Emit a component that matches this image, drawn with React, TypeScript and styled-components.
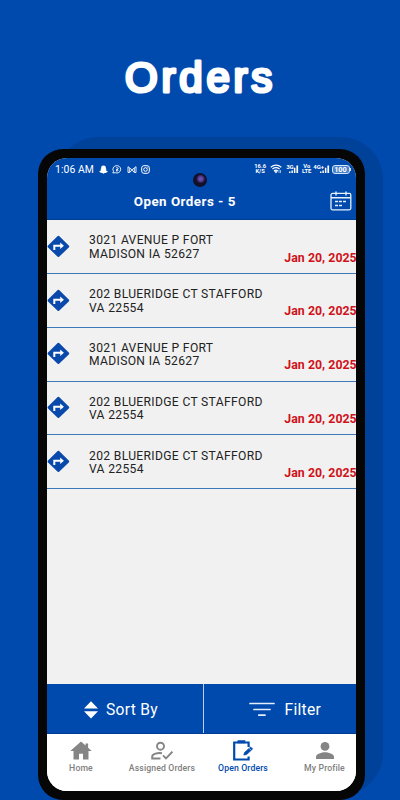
import React from 'react';
import styled, { createGlobalStyle } from 'styled-components';

const BLUE = '#004aad';

const Global = createGlobalStyle`
  * { box-sizing: border-box; }
  body { margin: 0; background: ${BLUE}; font-family: Roboto, "Liberation Sans", sans-serif; }
`;

const Page = styled.main`
  position: relative;
  width: 400px;
  height: 800px;
  overflow: hidden;
  background: ${BLUE};
`;

const Title = styled.h1`
  margin: 0;
  height: 149px;
  padding-top: 46px;
  svg { display: block; margin: 0 auto; }
`;

/* The round line join softens the corners of the lettering. */
const Lettering = styled.text`
  font: 400 42px "Liberation Sans", Arial, sans-serif;
  letter-spacing: 3.8px;
  fill: #fff;
  stroke: #fff;
  stroke-width: 3.2px;
  stroke-linejoin: round;
`;

const Backdrop = styled.div`
  position: absolute;
  left: 56px;
  top: 137px;
  width: 327px;
  height: 658px;
  border-radius: 42px;
  background: #004299;
`;

const Phone = styled.section`
  position: relative;
  width: 327px;
  height: 651px;
  margin-left: 37.5px;
  padding: 9px 8.5px 9px 9px;
  border-radius: 25px;
  background: #060606;
`;

const Screen = styled.div`
  height: 100%;
  display: flex;
  flex-direction: column;
  overflow: hidden;
  border-radius: 20px;
  background: #f1f1f1;
`;

const Camera = styled.span`
  position: absolute;
  left: 155.5px;
  top: 24px;
  width: 14px;
  height: 14px;
  border-radius: 50%;
  background: radial-gradient(circle at 55% 42%, #6a4ba8 0 1.5px, #40307c 3px, #130f28 4.6px);
`;

const StatusBar = styled.div`
  flex: none;
  height: 22px;
  display: flex;
  align-items: center;
  padding: 0 5px 0 8.5px;
  background: ${BLUE};
  color: #fff;
`;

const Clock = styled.span`
  width: 43.5px;
  font-size: 10.4px;
  letter-spacing: 0.08px;
  white-space: nowrap;
`;

const StatusIcons = styled.div`
  display: flex;
  align-items: center;
  gap: 4.6px;
`;

const Signals = styled.div`
  display: flex;
  align-items: center;
  margin-left: auto;
`;

const Tiny = styled.span<{ $w: number; $after: number }>`
  width: ${p => p.$w}px;
  margin-right: ${p => p.$after}px;
  font-size: 5.8px;
  line-height: 5px;
  font-weight: 700;
  text-align: center;
  white-space: nowrap;
`;

const Cell = styled.span<{ $before: number; $after: number }>`
  display: flex;
  margin: 0 ${p => p.$after}px 0 ${p => p.$before}px;
  font-size: 6px;
  line-height: 6px;
  font-weight: 700;
  align-items: flex-start;
  svg { margin-left: -4.5px; }
`;

const Battery = styled.span`
  width: 18px;
  height: 9px;
  border: 1px solid #d6e6fb;
  border-radius: 3px;
  background: #4a80c8;
  font-size: 7.4px;
  line-height: 7.5px;
  font-weight: 700;
  text-align: center;
`;

const BatteryTip = styled.i`
  width: 1.5px;
  height: 3px;
  background: #d6e6fb;
`;

const Header = styled.header`
  flex: none;
  height: 40px;
  display: grid;
  grid-template-columns: 276.500px 1fr;
  align-items: center;
  background: ${BLUE};
  border-bottom: 1px solid #003d94;
  color: #fff;
`;

const Heading = styled.h2`
  margin: 5px 0 0;
  text-align: center;
  font-size: 13.4px;
  line-height: 16px;
  font-weight: 700;
  letter-spacing: 0.47px;
`;

const CalendarSlot = styled.span`
  display: flex;
  padding: 2.5px 0 0 6.5px;
`;

const List = styled.ul`
  flex: 1;
  margin: 0;
  padding: 0;
  list-style: none;
`;

const Order = styled.li`
  height: 53.85px;
  display: grid;
  grid-template-columns: 42.5px 183px 1fr;
  border-bottom: 1px solid #3d78b8;
`;

const Direction = styled.span`
  padding: 14.8px 0 0 0.2px;
`;

const Address = styled.p`
  margin: 14.2px 0 0;
  font-size: 12.1px;
  line-height: 13.6px;
  letter-spacing: 0.34px;
  color: #222;
  white-space: pre-line;
`;

const DateText = styled.time`
  margin: 30.6px 0 0 12.3px;
  font-size: 12.3px;
  line-height: 14px;
  font-weight: 700;
  letter-spacing: 0.05px;
  white-space: nowrap;
  color: #d0121a;
`;

const Actions = styled.div`
  flex: none;
  height: 49.3px;
  display: grid;
  grid-template-columns: 157px 1fr;
  background: ${BLUE};
  border-bottom: 1px solid #003c96;
`;

const Action = styled.button<{ $left: number; $gap: number; $rule?: boolean }>`
  display: flex;
  align-items: center;
  gap: ${p => p.$gap}px;
  padding: 3px 0 0 ${p => p.$left}px;
  border: 0;
  border-right: ${p => (p.$rule ? '1px solid #b9cdea' : '0')};
  background: none;
  color: #fff;
  font: 400 15.6px/18px Roboto, sans-serif;
  letter-spacing: 0.3px;
`;

const Nav = styled.nav`
  flex: none;
  height: 57.5px;
  display: grid;
  grid-template-columns: 69px 93px 69px 94px;
  background: #fff;
`;

const Tab = styled.a<{ $active?: boolean }>`
  display: flex;
  flex-direction: column;
  align-items: center;
  padding-top: 5px;
  color: ${p => (p.$active ? BLUE : '#808080')};
  font-size: 8.7px;
  font-weight: 500;
  line-height: 10px;
  white-space: nowrap;
  letter-spacing: 0.12px;
  svg { flex: none; margin-bottom: 2.5px; }
`;

const Ghost = () => (
  <svg width="9" height="9" viewBox="0 0 9 9" fill="#fff"><path d="M4.500.4C3 .4 2.200 1.300 2.200 2.600v1l-.8.3.6.8C1.700 5.700 1 6.200.1 6.500l1 .9 1 .1.2.6 1-.1 1.200.7 1.200-.7 1 .1.200-.6 1-.1 1-.9C8 6.200 7.300 5.700 7 4.700l.6-.8-.8-.3v-1C6.800 1.300 6 .4 4.500.4Z" /></svg>
);
const Bubble = () => (
  <svg width="10" height="9" viewBox="0 0 10 9" fill="none" stroke="#fff" strokeWidth=".9"><path d="M.8 8 1.500 6.300A3.900 3.700 0 1 1 3.200 7.700Z" /><path d="M4.200 2.700h1a.8.8 0 0 1 0 1.700h-1m1 0a.8.8 0 0 1 0 1.600h-1Z" /></svg>
);
const Mail = () => (
  <svg width="10" height="9" viewBox="0 0 10 9" fill="none" stroke="#fff" strokeWidth=".9"><path d="M1 7.500V1.700L5 4.800 9 1.700v5.800H7.300V3.200M1 7.500h1.700V3.200M3 7 5 5.200 7 7" /></svg>
);
const Insta = () => (
  <svg width="9" height="9" viewBox="0 0 9 9" fill="none" stroke="#fff" strokeWidth="1"><rect x=".7" y=".7" width="7.600" height="7.600" rx="2.200" /><circle cx="4.500" cy="4.500" r="1.800" /><path d="M6.400 2.300h.6" /></svg>
);
const Wifi = () => (
  <svg width="12" height="10" viewBox="0 0 12 10" fill="none" stroke="#fff" strokeWidth="1.200"><path d="M.7 3.200Q6-.8 11.300 3.200M2.400 5Q6 2.300 9.600 5M4 6.800Q6 5.500 7.800 6.800" /><path d="m4.500 7.500 1.500 1.600 1.300-1.600ZM9 6v3M10.500 6v3" fill="#fff" strokeWidth=".6" /></svg>
);
const Bars = () => (
  <svg width="10" height="10" viewBox="0 0 10 10" fill="#fff"><path d="M0 7.500h1.500v1.500H0ZM2.400 6.400h1.500V9H2.400ZM4.900 3.700h1.500V9H4.900ZM7.400 1.500h1.700V9H7.400Z" /></svg>
);
const Calendar = () => (
  <svg width="22" height="20" viewBox="0 0 22 20" fill="none" stroke="#e8f0fb" strokeWidth="1.300"><rect x="1" y="2.400" width="19.800" height="16.400" rx="1.500" /><path d="M1 6.700h19.800M6 .4v4M16 .4v4" strokeWidth="1.400" /><path d="M8.900 10.600h3M13 10.600h3M5 14.600h3M9 14.600h3M5 10.600h3" strokeWidth="1.500" /></svg>
);
const Turn = () => (
  <svg width="23" height="23" viewBox="0 0 23 23"><path d="M10.700 1 .8 10.800q-.5.7 0 1.400l9.900 9.600q.7.6 1.400 0l9.900-9.600q.5-.7 0-1.400L12.100 1q-.7-.6-1.400 0Z" fill="#0849ab" /><path d="M7.300 15v-4.300h6.500" fill="none" stroke="#fff" strokeWidth="2" /><path d="m13.200 7.600 3.700 3.200-3.700 3.300Z" fill="#fff" /></svg>
);
const SortIcon = () => (
  <svg width="14" height="18" viewBox="0 0 14 18" fill="#fff"><path d="m7 .3 7 7.300H0ZM0 10.200h14L7 17.500Z" /></svg>
);
const FilterIcon = () => (
  <svg width="26" height="15" viewBox="0 0 26 15" stroke="#e3edfb" strokeWidth="1.700" strokeLinecap="round"><path d="M1 1.500h24M5 7.500h16M9.800 13.200h6.200" /></svg>
);
const HomeIcon = () => (
  <svg width="22" height="22" viewBox="0 0 22 22" fill="#858585"><path d="M11 2.500.3 12.100h3.200v8.300H9v-5.600h4v5.600h5.500v-8.300h3.200l-3.600-3.300V4.400h-2.500V6.500Z" /></svg>
);
const Assigned = () => (
  <svg width="22" height="22" viewBox="0 0 22 22" fill="none" stroke="#858585" strokeWidth="1.900"><circle cx="9.500" cy="7.200" r="3.500" /><path d="M11 14.200C6.500 13.300 1.200 15.200 1.200 17.500v2H9.500M12 16.300l3 3 6.400-6.600" /></svg>
);
const OpenIcon = () => (
  <svg width="22" height="22" viewBox="0 0 22 22" fill="none" stroke={BLUE} strokeWidth="2.200"><path d="M16.600 8V3.500H2.200v17h14.400v-3" /><path d="M5.500 2.700h7.800M9.400 1.200v1.500" strokeWidth="3" /><path d="m11.800 16 .8-2.500 6-5.500 2 2-6 5.500Z" fill={BLUE} strokeWidth=".8" /><path d="m17 9.200 2.200 2.200" stroke="#fff" strokeWidth=".6" /></svg>
);
const Profile = () => (
  <svg width="22" height="22" viewBox="0 0 22 22" fill="#858585"><circle cx="11" cy="7.400" r="4.400" /><path d="M2 20v-2.200c0-3 6-4.500 9-4.500s9 1.500 9 4.500V20Z" /></svg>
);

const MADISON = '3021 AVENUE P FORT\nMADISON IA 52627';
const STAFFORD = '202 BLUERIDGE CT STAFFORD\nVA 22554';
const orders = [MADISON, STAFFORD, MADISON, STAFFORD, STAFFORD];

export default function App() {
  return (
    <Page>
      <Global />
      <Backdrop />
      <Title>
        <svg width="180" height="60" viewBox="0 0 180 60">
          <Lettering x="15" y="45.500">Orders</Lettering>
        </svg>
      </Title>
      <Phone>
        <Screen>
          <StatusBar>
            <Clock>1:06 AM</Clock>
            <StatusIcons><Ghost /><Bubble /><Mail /><Insta /></StatusIcons>
            <Signals>
              <Tiny $w={13} $after={3}>16.6<br />K/S</Tiny>
              <Wifi />
              <Cell $before={4.5} $after={2}>3G<Bars /></Cell>
              <Tiny $w={11} $after={1}>Vo<br />LTE</Tiny>
              <Cell $before={0} $after={2}>4G+<Bars /></Cell>
              <Battery>100</Battery>
              <BatteryTip />
            </Signals>
          </StatusBar>
          <Header>
            <Heading>Open Orders - 5</Heading>
            <CalendarSlot><Calendar /></CalendarSlot>
          </Header>
          <List>
            {orders.map((address, i) => (
              <Order key={i}>
                <Direction><Turn /></Direction>
                <Address>{address}</Address>
                <DateText>Jan 20, 2025</DateText>
              </Order>
            ))}
          </List>
          <Actions>
            <Action $left={37.5} $gap={8} $rule><SortIcon />Sort By</Action>
            <Action $left={45} $gap={10}><FilterIcon />Filter</Action>
          </Actions>
          <Nav>
            <Tab><HomeIcon />Home</Tab>
            <Tab><Assigned />Assigned Orders</Tab>
            <Tab $active><OpenIcon />Open Orders</Tab>
            <Tab><Profile />My Profile</Tab>
          </Nav>
        </Screen>
        <Camera />
      </Phone>
    </Page>
  );
}
